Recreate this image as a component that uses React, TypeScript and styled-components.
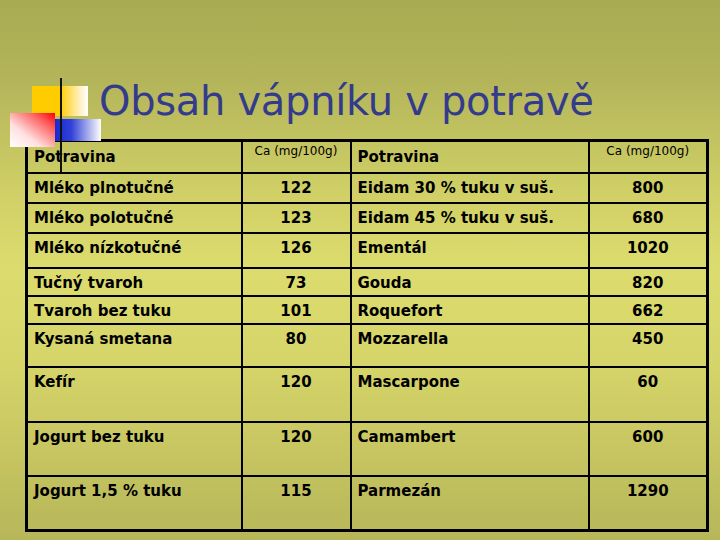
import React from "react";
import styled, { createGlobalStyle } from "styled-components";

const GlobalStyle = createGlobalStyle`
  html, body {
    margin: 0;
    padding: 0;
  }
  body {
    font-family: "DejaVu Sans", sans-serif;
  }
`;

type Row = {
  food: string;
  ca: string;
  cheese: string;
  cheeseCa: string;
  height: number;
};

const rows: Row[] = [
  { food: "Mléko plnotučné", ca: "122", cheese: "Eidam 30 % tuku v suš.", cheeseCa: "800", height: 30 },
  { food: "Mléko polotučné", ca: "123", cheese: "Eidam 45 % tuku v suš.", cheeseCa: "680", height: 30 },
  { food: "Mléko nízkotučné", ca: "126", cheese: "Ementál", cheeseCa: "1020", height: 35 },
  { food: "Tučný tvaroh", ca: "73", cheese: "Gouda", cheeseCa: "820", height: 28 },
  { food: "Tvaroh bez tuku", ca: "101", cheese: "Roquefort", cheeseCa: "662", height: 28 },
  { food: "Kysaná smetana", ca: "80", cheese: "Mozzarella", cheeseCa: "450", height: 43 },
  { food: "Kefír", ca: "120", cheese: "Mascarpone", cheeseCa: "60", height: 55 },
  { food: "Jogurt bez tuku", ca: "120", cheese: "Camambert", cheeseCa: "600", height: 54 },
  { food: "Jogurt 1,5 % tuku", ca: "115", cheese: "Parmezán", cheeseCa: "1290", height: 55 },
];

export default function App() {
  return (
    <>
      <GlobalStyle />
      <Slide>
        <Logo>
          <YellowSquare />
          <RedSquare />
          <BlueSquare />
          <LogoLine />
        </Logo>
        <Title>Obsah vápníku v potravě</Title>
        <Table>
          <colgroup>
            <col style={{ width: 215 }} />
            <col style={{ width: 109 }} />
            <col style={{ width: 238 }} />
            <col style={{ width: 119 }} />
          </colgroup>
          <thead>
            <HeadRow>
              <HeadCell>Potravina</HeadCell>
              <UnitCell>Ca (mg/100g)</UnitCell>
              <HeadCell>Potravina</HeadCell>
              <UnitCell>Ca (mg/100g)</UnitCell>
            </HeadRow>
          </thead>
          <tbody>
            {rows.map((r) => (
              <BodyRow key={r.food} $h={r.height}>
                <NameCell>{r.food}</NameCell>
                <ValueCell>{r.ca}</ValueCell>
                <NameCell>{r.cheese}</NameCell>
                <ValueCell>{r.cheeseCa}</ValueCell>
              </BodyRow>
            ))}
          </tbody>
        </Table>
      </Slide>
    </>
  );
}

const Slide = styled.div`
  position: relative;
  width: 720px;
  height: 540px;
  overflow: hidden;
  box-sizing: border-box;
  padding: 76px 0 0 25px;
  background: linear-gradient(
    to bottom,
    #a8ab52 0%,
    #b4b55a 15%,
    #cfcf66 35%,
    #dcdc6e 50%,
    #d5d469 68%,
    #b7b659 100%
  );
`;

const Title = styled.h1`
  margin: 0 0 0 74px;
  height: 63px;
  font-family: "DejaVu Sans", sans-serif;
  font-weight: normal;
  font-size: 40px;
  line-height: 50px;
  color: #343a8c;
  letter-spacing: -0.3px;
`;

const Logo = styled.div`
  position: absolute;
  left: 0;
  top: 0;
  width: 110px;
  height: 180px;
  pointer-events: none;
  z-index: 2;
`;

const YellowSquare = styled.div`
  position: absolute;
  left: 32px;
  top: 86px;
  width: 56px;
  height: 30px;
  background: linear-gradient(to right, #ffcc00 0%, #ffcc00 50%, #fff0c0 85%, #ffffff 100%);
`;

const RedSquare = styled.div`
  position: absolute;
  left: 10px;
  top: 113px;
  width: 45px;
  height: 34px;
  background: linear-gradient(to top right, #ffffff 0%, #ffe0e0 35%, #ff6060 75%, #ff0000 100%);
`;

const BlueSquare = styled.div`
  position: absolute;
  left: 55px;
  top: 119px;
  width: 46px;
  height: 22px;
  background: linear-gradient(to right, #1a2ad0 0%, #3040d8 35%, #c0c4f0 80%, #ffffff 100%);
`;

const LogoLine = styled.div`
  position: absolute;
  left: 60px;
  top: 78px;
  width: 2px;
  height: 94px;
  background: #111;
`;

const Table = styled.table`
  position: relative;
  z-index: 1;
  width: 681px;
  border-collapse: collapse;
  table-layout: fixed;
  border: 3px solid #000;
  font-family: "DejaVu Sans", sans-serif;
  font-weight: bold;
  color: #000;
`;

const HeadRow = styled.tr`
  height: 32px;
`;

const HeadCell = styled.th`
  padding: 0 6px;
  border: 2px solid #000;
  text-align: left;
  vertical-align: middle;
  font-size: 15px;
  line-height: 18px;
  font-weight: bold;
`;

const UnitCell = styled.th`
  padding: 2px 0 0;
  border: 2px solid #000;
  text-align: center;
  vertical-align: top;
  font-size: 12px;
  line-height: 14px;
  font-weight: normal;
`;

const BodyRow = styled.tr<{ $h: number }>`
  height: ${({ $h }) => $h}px;
`;

const NameCell = styled.td`
  padding: 4px 6px 0;
  border: 2px solid #000;
  vertical-align: top;
  font-size: 15px;
  line-height: 20px;
  white-space: nowrap;
`;

const ValueCell = styled.td`
  padding: 4px 0 0;
  border: 2px solid #000;
  text-align: center;
  vertical-align: top;
  font-size: 15px;
  line-height: 20px;
`;
